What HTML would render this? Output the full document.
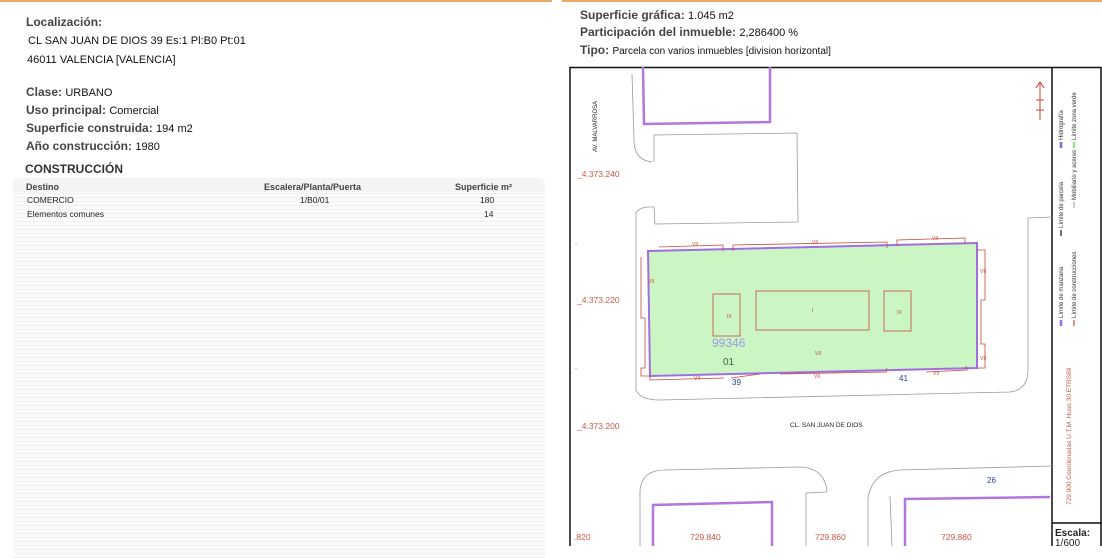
<!DOCTYPE html>
<html><head><meta charset="utf-8"><style>
body{margin:0;width:1102px;height:546px;background:#fff;position:relative;overflow:hidden;font-family:"Liberation Sans",sans-serif;color:#222}
.a{position:absolute;white-space:nowrap}
.l{font-weight:bold;color:#444;font-size:12px}
.v{font-size:11px;color:#111;font-weight:normal}
</style></head><body>
<div class="a" style="left:0;top:0;width:552px;height:2px;background:#e8a866"></div>
<div class="a" style="left:562px;top:0;width:540px;height:2px;background:#e8a866"></div>
<div class="a l" style="left:26px;top:15px">Localización:</div>
<div class="a v" style="left:28px;top:35px">CL SAN JUAN DE DIOS 39 Es:1 Pl:B0 Pt:01</div>
<div class="a v" style="left:27px;top:54px">46011 VALENCIA [VALENCIA]</div>
<div class="a l" style="left:26px;top:85px">Clase: <span class="v">URBANO</span></div>
<div class="a l" style="left:26px;top:103px">Uso principal: <span class="v"> Comercial</span></div>
<div class="a l" style="left:26px;top:121px">Superficie construida: <span class="v">194 m2</span></div>
<div class="a l" style="left:26px;top:139px">Año construcción: <span class="v">1980</span></div>
<div class="a l" style="left:25px;top:162px;color:#333">CONSTRUCCIÓN</div>
<div class="a" style="left:13px;top:178px;width:532px;height:380px;border-radius:6px 6px 0 0;background:repeating-linear-gradient(#fbfbfb 0 3px,#f1f1f1 3px 4px)"></div>
<div class="a" style="left:13px;top:178px;width:532px;height:14px;background:#f4f4f4;border-radius:6px 6px 0 0"></div>
<div class="a" style="left:26px;top:182px;font-size:9px;font-weight:bold;color:#444">Destino</div>
<div class="a" style="left:264px;top:182px;font-size:9px;font-weight:bold;color:#444">Escalera/Planta/Puerta</div>
<div class="a" style="left:455px;top:182px;font-size:9px;font-weight:bold;color:#444">Superficie m²</div>
<div class="a" style="left:27px;top:195px;font-size:8.5px">COMERCIO</div>
<div class="a" style="left:300px;top:195px;font-size:8.5px">1/B0/01</div>
<div class="a" style="left:480px;top:195px;font-size:8.5px">180</div>
<div class="a" style="left:27px;top:209px;font-size:8.5px">Elementos comunes</div>
<div class="a" style="left:484px;top:209px;font-size:8.5px">14</div>

<div class="a l" style="left:580px;top:8px">Superficie gráfica: <span class="v">1.045 m2</span></div>
<div class="a l" style="left:580px;top:25px">Participación del inmueble: <span class="v">2,286400 %</span></div>
<div class="a l" style="left:580px;top:43px">Tipo: <span class="v" style="font-size:10px">Parcela con varios inmuebles [division horizontal]</span></div>

<svg class="a" style="left:0;top:0" width="1102" height="546" font-family="Liberation Sans,sans-serif">
<rect x="570" y="67.5" width="531" height="490" fill="none" stroke="#111" stroke-width="1.5"/>
<line x1="1052" y1="67" x2="1052" y2="546" stroke="#111" stroke-width="1.5"/>
<line x1="1052" y1="523" x2="1102" y2="523" stroke="#111" stroke-width="1.5"/>
<g fill="none" stroke="#999" stroke-width="0.8">
<path d="M632 74 L634 140 Q634 160 652 162"/>
<path d="M654 162 L654 135 L797 133 L798 222 L655 224 L654 207 Q640 206 636 213 L636 390 Q640 400 660 400 L1010 392 Q1028 390 1028 370 L1028 218 L1052 217"/>
<path d="M640 546 L640 490 Q642 470 665 470 L800 467 Q825 468 827 492 L806 493 L806 546"/>
<path d="M868 546 L868 498 Q872 472 900 470 L1052 466"/>
<path d="M890 496 L892 546"/>
</g>
<g fill="none" stroke="#b277dd" stroke-width="2.5">
<path d="M643 67 L644 124 L770 122 L770 67"/>
<path d="M653 546 L653 505 L772 502 L772 546"/>
<path d="M905 546 L905 499 L1050 497"/>
</g>
<polygon points="648,251 977,243 977,368 650,376" fill="#ccf5c4" stroke="#a06ee0" stroke-width="2"/>
<g fill="none" stroke="#c8483a" stroke-width="0.8">
<rect x="713" y="294" width="27" height="42"/>
<rect x="756" y="291" width="113" height="39"/>
<rect x="884" y="291" width="27" height="40"/>
<path d="M659 247 L723 245 L723 251 M733 251 L733 245 L887 242 L887 248 M897 246 L897 240 L965 238 L965 244"/>
<path d="M641 257 L641 318 L645 318 L645 368 L641 368 L641 376 L650 376 L650 380 L724 378"/>
<path d="M731 378 L760 374 M780 374 L886 372 L887 368 M926 372 L967 370 L966 366"/>
<path d="M977 250 L985 250 L985 300 L981 300 L981 344 L985 344 L985 368 L977 368"/>
</g>
<g fill="#c8483a" font-size="5">
<text x="692" y="246">VII</text><text x="812" y="244">VII</text><text x="932" y="240">VII</text>
<text x="648" y="283">VII</text><text x="980" y="273">VII</text><text x="980" y="360">VII</text>
<text x="694" y="380">VII</text><text x="814" y="378">VII</text><text x="933" y="375">VII</text>
<text x="727" y="318">IX</text><text x="812" y="312">I</text><text x="897" y="314">IX</text><text x="815" y="355">VII</text>
</g>
<text x="712" y="347" font-size="12" fill="#9c9ce0">99346</text>
<text x="723" y="365" font-size="10" fill="#3a6a3a">01</text>
<text x="732" y="385" font-size="8" fill="#2240a0">39</text>
<text x="899" y="381" font-size="8" fill="#2240a0">41</text>
<text x="987" y="483" font-size="8" fill="#2240a0">26</text>
<text x="790" y="427" font-size="6.5" fill="#222">CL. SAN JUAN DE DIOS</text>
<text transform="translate(597,152) rotate(-90)" font-size="6" fill="#222">AV. MALVARROSA</text>
<g fill="#c85a4a" font-size="8.5">
<text x="577" y="177">_4.373.240</text><text x="577" y="303">_4.373.220</text><text x="577" y="429">_4.373.200</text>
<text x="574" y="540">.820</text><text x="690" y="540">729.840</text><text x="815" y="540">729.860</text><text x="941" y="540">729.880</text>
</g>
<g fill="#c85a4a"><text x="575" y="245" font-size="6">-</text><text x="575" y="370" font-size="6">-</text></g>
<path d="M1036 88 L1040 82 L1044 88 M1040 82 L1040 120 M1036 100 H1044 M1036 110 H1044" stroke="#d04030" fill="none" stroke-width="1"/>
<g stroke-width="2.5">
<line x1="1061" y1="326" x2="1061" y2="320" stroke="#a06ee0"/>
<line x1="1061" y1="236" x2="1061" y2="230" stroke="#111" stroke-width="1.2"/>
<line x1="1061" y1="148" x2="1061" y2="142" stroke="#7070e0"/>
<line x1="1074" y1="326" x2="1074" y2="320" stroke="#c8483a" stroke-width="1.2"/>
<line x1="1074" y1="208" x2="1074" y2="202" stroke="#999" stroke-width="1"/>
<line x1="1074" y1="148" x2="1074" y2="142" stroke="#9be08c"/>
</g>
<g font-size="6" fill="#333">
<text transform="translate(1063,318) rotate(-90)">Límite de manzana</text>
<text transform="translate(1063,228) rotate(-90)">Límite de parcela</text>
<text transform="translate(1063,140) rotate(-90)">Hidrografía</text>
<text transform="translate(1076,318) rotate(-90)">Límite de construcciones</text>
<text transform="translate(1076,200) rotate(-90)">Mobiliario y aceras</text>
<text transform="translate(1076,140) rotate(-90)">Límite zona verde</text>
</g>
<text transform="translate(1071,505) rotate(-90)" font-size="6.5" fill="#c85a4a">729.900 Coordenadas U.T.M. Huso 30 ETRS89</text>
<text x="1055" y="536" font-size="10" font-weight="bold" fill="#222">Escala:</text>
<text x="1055" y="546" font-size="10" fill="#222">1/600</text>
</svg>
</body></html>
